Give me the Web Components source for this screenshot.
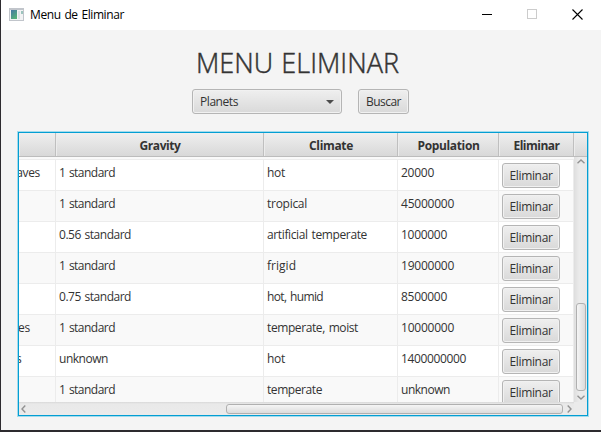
<!DOCTYPE html>
<html lang="es"><head><meta charset="utf-8"><title>Menu de Eliminar</title>
<style>html,body{margin:0;height:100%;overflow:hidden;background:#f4f4f4}</style></head>
<body><app-window></app-window>
<script>
const define=(name,html,setup)=>customElements.define(name,class extends HTMLElement{
  connectedCallback(){
    if(this.shadowRoot)return;
    const t=document.createElement('template');
    t.innerHTML=html;
    this.attachShadow({mode:'open'}).append(t.content.cloneNode(true));
    if(setup)setup.call(this,this.shadowRoot);
  }
});

// Label whose tracking is adjusted so that its text spans the width given in "w".
define('fit-text',`<style>:host{display:inline-block;white-space:pre;word-spacing:1px}span{display:inline-block}</style><span><slot></slot></span>`,function(r){
  const w=+this.getAttribute('w'),s=r.querySelector('span');
  if(!w)return;
  const n=this.textContent.length;
  s.style.letterSpacing=((w-s.getBoundingClientRect().width)/n)+'px';
});

define('push-button',`<style>
:host{display:flex;box-sizing:border-box;height:25px;align-items:center;justify-content:center;border:1px solid #b5b5b5;border-radius:3px;background:linear-gradient(#efefef,#d9d9d9);box-shadow:inset 0 0 0 1px #f1f1f1;color:#333;line-height:16px}
</style><slot></slot>`);

define('combo-box',`<style>
:host{display:flex;box-sizing:border-box;width:150px;height:25px;align-items:center;justify-content:space-between;padding:0 7px;border:1px solid #b5b5b5;border-radius:3px;background:linear-gradient(#efefef,#d9d9d9);box-shadow:inset 0 0 0 1px #f1f1f1;color:#333;line-height:16px}
svg{display:block}</style><slot></slot><svg width="8" height="4"><path d="M0 0H8L4 4Z" fill="#4c4c4c"/></svg>`);

define('title-bar',`<style>
:host{display:flex;height:30px;background:#fff;color:#000;font-size:12px;align-items:center;box-sizing:border-box;padding:0 18px 2px 8px}
.app{margin-right:6px}.gap{flex:1}svg{display:block}.ctl{display:flex;gap:35px}
::slotted(*){padding-top:2px}
</style>
<svg class="app" width="15" height="13"><defs><linearGradient id="g" x2=".6" y2="1"><stop stop-color="#4676a5"/><stop offset="1" stop-color="#55b079"/></linearGradient></defs>
<rect width="15" height="13" fill="#c1c5cb"/><rect x="1" y="2" width="13" height="10" fill="#f2f3f4"/><rect x="2" y="2" width="6" height="9" fill="url(#g)"/><rect x="9" y="3" width="2" height="8" fill="#dfe2e6"/><rect x="12" y="3" width="2" height="3" fill="#9cc4bd"/></svg>
<slot></slot><span class="gap"></span>
<div class="ctl"><svg width="10" height="10"><path d="M0 5.5H10" stroke="#000"/></svg>
<svg width="10" height="10"><rect x=".5" y=".5" width="9" height="9" fill="none" stroke="#ccc"/></svg>
<svg width="11" height="11"><path d="M.5 .5L10.5 10.5M10.5 .5L.5 10.5" stroke="#000" stroke-width="1.1"/></svg></div>`);

define('scroll-bar',`<style>
:host{display:flex;box-sizing:border-box;background:linear-gradient(90deg,#dedede,#ebebeb 40%,#e9e9e9);flex-direction:column;align-items:center;padding:2px 0 2px}
:host([horizontal]){flex-direction:row;background:linear-gradient(#d8d8d8,#e9e9e9 15%,#ebebeb);padding:0 2px 0 2px}
.thumb{box-sizing:border-box;width:10px;height:88px;border:1px solid #b0b0b0;border-radius:3px;background:linear-gradient(90deg,#f5f5f5,#dcdcdc)}
:host([horizontal]) .thumb{width:337px;height:10px;background:linear-gradient(#f5f5f5,#dcdcdc)}
.gap{flex:1}svg{display:block}.h{display:none}:host([horizontal]) .h{display:block}:host([horizontal]) .v{display:none}
.end{margin-top:4px}:host([horizontal]) .end{margin:0 0 0 4px}
path{fill:none;stroke:#929292;stroke-width:1.4}
</style>
<svg class="v" width="8" height="5"><path d="M.5 4.3L4 1L7.5 4.3"/></svg>
<svg class="h" width="5" height="8"><path d="M4.3 .5L1 4L4.3 7.5"/></svg>
<span class="gap"></span><div class="thumb"></div>
<svg class="v end" width="8" height="5"><path d="M.5 .7L4 4L7.5 .7"/></svg>
<svg class="h end" width="5" height="8"><path d="M.7 .5L4 4L.7 7.5"/></svg>`);

define('header-row',`<style>
:host{display:grid;grid-template-columns:37px 208px 134px 101px 75px 13px;height:24px;box-sizing:border-box;border-bottom:1px solid #bcbcbc;background:linear-gradient(#efefef,#d8d8d8)}
div{display:flex;align-items:center;justify-content:center;font-weight:700;color:#333;border-right:1px solid #bfbfbf;box-shadow:inset 1px 0 #ececec;padding:3px 0 0 1px;line-height:16px}
div:last-child{border:0}
</style><div></div><div><fit-text w="41">Gravity</fit-text></div><div><fit-text w="44">Climate</fit-text></div><div><fit-text w="62">Population</fit-text></div><div><fit-text w="46">Eliminar</fit-text></div><div></div>`);

define('data-row',`<style>
:host{display:grid;grid-template-columns:37px 208px 134px 101px 75px;height:31px;box-sizing:border-box;border-bottom:1px solid #ececec;background:#fff;color:#333}
:host([odd]){background:#f9f9f9}
div{box-sizing:border-box;border-right:1px solid #ececec;padding:4px 0 0 3px;line-height:17px;overflow:hidden;white-space:nowrap}
.first{display:flex;justify-content:flex-end;padding:4px 15px 0 0}
.act{padding:3px 0 0 3px;overflow:visible}
push-button{width:58px}
</style><div class="first"></div><div></div><div></div><div></div><div class="act"><push-button><fit-text w="43">Eliminar</fit-text></push-button></div>`,function(r){
  const c=r.querySelectorAll('div');
  JSON.parse(this.getAttribute('cells')).forEach(([t,w,pad],i)=>{
    if(!t)return;
    const f=document.createElement('fit-text');f.textContent=t;f.setAttribute('w',w);
    f.style.flex='none';
    if(pad)c[i].style.paddingRight=pad+'px';
    c[i].append(f);
  });
});

define('data-table',`<style>
:host{display:flex;flex-direction:column;box-sizing:border-box;width:570px;height:284px;border:1px solid #039ed3;box-shadow:0 0 0 1px #a3dbec;background:#fff;overflow:hidden}
.mid{display:grid;grid-template-columns:555px 13px;height:245px}
.rows{overflow:hidden}.pre{height:2px;background:#f9f9f9;border-bottom:1px solid #ececec}
.foot{display:grid;grid-template-columns:555px 13px;height:13px;background:#ebebeb}
</style><header-row></header-row><div class="mid"><div class="rows"><div class="pre"></div></div><scroll-bar></scroll-bar></div><div class="foot"><scroll-bar horizontal></scroll-bar></div>`,function(r){
  const S=['1 standard',56],data=[
   [['leaves',33],S,['hot',18],['20000',33]],
   [[''],S,['tropical',40],['45000000',53]],
   [[''],['0.56 standard',72],['artificial temperate',100],['1000000',46]],
   [[''],S,['frigid',29],['19000000',53]],
   [[''],['0.75 standard',72],['hot, humid',56],['8500000',46]],
   [['es',12,25],S,['temperate, moist',91],['10000000',53]],
   [['s',6,33],['unknown',49],['hot',18],['1400000000',65]],
   [[''],S,['temperate',55],['unknown',49]]];
  data.forEach((d,i)=>{const e=document.createElement('data-row');e.setAttribute('cells',JSON.stringify(d));if(i%2)e.setAttribute('odd','');r.querySelector('.rows').append(e)});
});

define('app-window',`<style>
:host{display:flex;flex-direction:column;box-sizing:border-box;width:601px;height:432px;border-left:1px solid #2d2b2f;border-bottom:2px solid #2d2b2f;background:#f4f4f4;font:12px/16px "Open Sans","Noto Sans",sans-serif;overflow:hidden}
h1{margin:13px 0 1px 195px;font-size:27px;font-weight:300;line-height:40px;color:#333;height:40px;-webkit-text-stroke:.45px #333}
.bar{display:flex;gap:16px;margin:5px 0 0 191px}
push-button{width:51px}data-table{margin:18px 0 0 17px}
</style><title-bar><fit-text w="94">Menu de Eliminar</fit-text></title-bar>
<h1><fit-text w="203">MENU ELIMINAR</fit-text></h1>
<div class="bar"><combo-box><fit-text w="38">Planets</fit-text></combo-box><push-button><fit-text w="35">Buscar</fit-text></push-button></div>
<data-table></data-table>`);
</script></body></html>
